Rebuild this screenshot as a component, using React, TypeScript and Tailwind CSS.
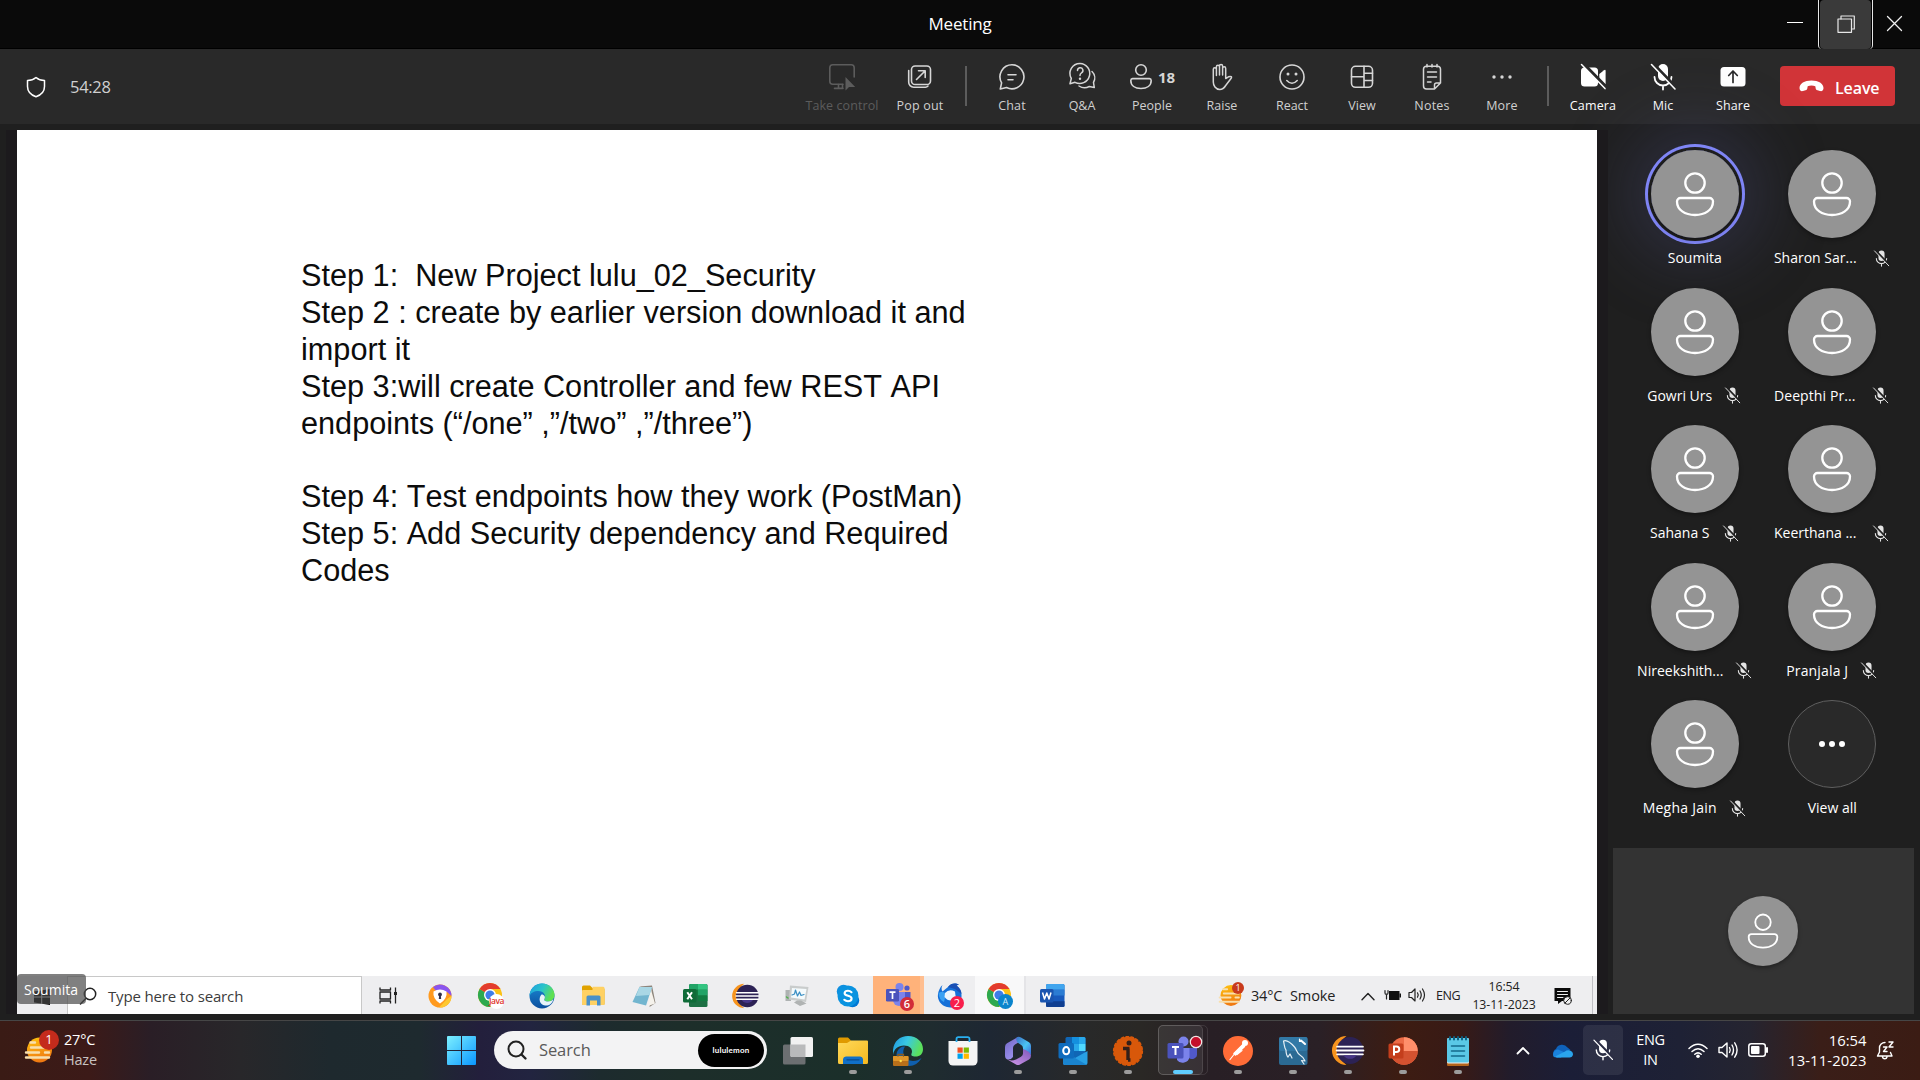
import React from "react";

const UI = "font-['Open_Sans','Noto_Sans',sans-serif]";

type IconProps = { w: number; h?: number; vb?: string; children: React.ReactNode; className?: string };

function Icon({ w, h, vb, children, className }: IconProps) {
  return (
    <svg
      width={w}
      height={h ?? w}
      viewBox={vb ?? `0 0 ${w} ${h ?? w}`}
      fill="none"
      strokeLinecap="round"
      strokeLinejoin="round"
      className={`shrink-0 overflow-visible ${className ?? ""}`}
    >
      {children}
    </svg>
  );
}

/* ---------- Meeting toolbar icons ---------- */

const TakeControlIcon = () => (
  <Icon w={28}>
    <g stroke="#5c5c5c" strokeWidth="1.6">
      <path d="M15 21.2H4.800A3 3 0 0 1 1.800 18.200V4.800A3 3 0 0 1 4.800 1.800H23.200A3 3 0 0 1 26.200 4.800V14" />
      <path d="M10.500 21.500V25M6.500 25.400H15M14.500 21.500V25" />
    </g>
    <path d="M17.500 14V27.500L21 24H27.200Z" fill="#5c5c5c" />
  </Icon>
);

const PopOutIcon = () => (
  <Icon w={28}>
    <g stroke="#d6d6d6" strokeWidth="1.6">
      <rect x="5.500" y="3" width="19" height="18.500" rx="3.600" />
      <path d="M2.700 7.500V19A5 5 0 0 0 7.700 24.200H19.500A4 4 0 0 0 22 23" />
      <path d="M10.500 16.500L19 8M12.500 7.800H19.200V14.500" />
    </g>
  </Icon>
);

const ChatIcon = () => (
  <Icon w={28}>
    <g stroke="#d6d6d6" strokeWidth="1.6">
      <path d="M14 1.800A12 12 0 1 1 8.500 24.500L2.300 26L3.600 19.800A12 12 0 0 1 14 1.800Z" />
      <path d="M10 11.700H18M10 16.700H15" />
    </g>
  </Icon>
);

const QAIcon = () => (
  <Icon w={28} h={30}>
    <g stroke="#d6d6d6" strokeWidth="1.5">
      <path d="M12 1.500A10 10 0 1 1 7 20.300L2 21.800L3.300 16.500A10 10 0 0 1 12 1.500Z" />
      <path d="M9.500 8.500A2.700 2.700 0 1 1 13.500 10.800Q12 11.700 12 13.500" />
      <path d="M24 9.500A9 9 0 0 1 25.500 20.500L26.300 25.500L21.300 24.500A10 10 0 0 1 11 24" />
    </g>
    <circle cx="12" cy="16.800" r="1.200" fill="#d6d6d6" />
  </Icon>
);

const PeopleIcon = () => (
  <Icon w={24} h={28}>
    <g stroke="#d6d6d6" strokeWidth="1.600">
      <circle cx="12" cy="7" r="5.300" />
      <path d="M3.600 15.600H20.400A2 2 0 0 1 22.200 17.500C22.200 22.500 18 25.500 12 25.500S1.800 22.500 1.800 17.500A2 2 0 0 1 3.600 15.600Z" />
    </g>
  </Icon>
);

const RaiseIcon = () => (
  <Icon w={26} h={28}>
    <path
      d="M4.300 15.500V6.200A1.500 1.500 0 0 1 7.400 6.200V12.500M7.400 11V3.800A1.500 1.500 0 0 1 10.500 3.800V12M10.500 10V3A1.500 1.500 0 0 1 13.600 3V12M13.600 11V5.400A1.500 1.500 0 0 1 16.700 5.400V15.500L19.500 13.800C22 12.800 23.300 14 22 15.500L16.700 22.500C15.300 24.800 13.800 26.500 10.800 26.500C6.500 26.500 4.300 22.500 4.300 19V15"
      stroke="#d6d6d6"
      strokeWidth="1.500"
    />
  </Icon>
);

const ReactIcon = () => (
  <Icon w={28}>
    <circle cx="14" cy="14" r="12" stroke="#d6d6d6" strokeWidth="1.600" />
    <circle cx="10" cy="11" r="1.500" fill="#d6d6d6" />
    <circle cx="18" cy="11" r="1.500" fill="#d6d6d6" />
    <path d="M8.800 17.500Q14 23 19.200 17.500" stroke="#d6d6d6" strokeWidth="1.600" />
  </Icon>
);

const ViewIcon = () => (
  <Icon w={28}>
    <g stroke="#d6d6d6" strokeWidth="1.600">
      <rect x="3.500" y="3.300" width="21" height="21" rx="4" />
      <path d="M16 3.300V24.300M3.500 13.800H16M16 10.200H24.500M16 17.500H24.500" />
    </g>
  </Icon>
);

const NotesIcon = () => (
  <Icon w={28}>
    <g stroke="#d6d6d6" strokeWidth="1.500">
      <path d="M16.500 26H8.500A3 3 0 0 1 5.500 23V6A3 3 0 0 1 8.500 3.200H19.500A3 3 0 0 1 22.500 6V20L16.500 26V22A2 2 0 0 1 18.500 20H22.500" />
      <path d="M9 1.500V4M14 1.500V4M19 1.500V4M9.500 9H18.500M9.500 14H18.500M9.500 19H13" />
    </g>
  </Icon>
);

const MoreIcon = () => (
  <Icon w={28}>
    <circle cx="6" cy="14" r="1.700" fill="#d6d6d6" />
    <circle cx="14" cy="14" r="1.700" fill="#d6d6d6" />
    <circle cx="22" cy="14" r="1.700" fill="#d6d6d6" />
  </Icon>
);

const CameraIcon = () => (
  <Icon w={28}>
    <rect x="2" y="4.500" width="17" height="19" rx="3.500" fill="#fff" />
    <path d="M20.300 11L25 7.200Q26.600 6 26.600 8V20.500Q26.600 22 25 21L20.300 17.500Z" fill="#fff" />
    <path d="M4.500 1L27 24" stroke="#292929" strokeWidth="3.500" />
    <path d="M2.500 1.500L26 25.600" stroke="#fff" strokeWidth="1.500" />
  </Icon>
);

const MicOffIcon = ({ size, bg, color = "#fff" }: { size: number; bg: string; color?: string }) => (
  <Icon w={size} vb="0 0 28 28">
    <rect x="9" y="1" width="10" height="17" rx="5" fill={color} />
    <path d="M5.500 14A8.500 8.500 0 0 0 22.500 14M14 22.500V26.500" stroke={color} strokeWidth="1.800" />
    <path d="M4.500 1.200L27.200 24.500" stroke={bg} strokeWidth="3.200" />
    <path d="M2.500 1.500L26 26" stroke={color} strokeWidth="1.600" />
  </Icon>
);

const ShareIcon = () => (
  <Icon w={28}>
    <rect x="1.500" y="4" width="25" height="19.500" rx="3.500" fill="#fff" />
    <path d="M14 19.500V8.500M9.700 12.500L14 8L18.300 12.500" stroke="#292929" strokeWidth="1.700" />
  </Icon>
);

const HangUpIcon = () => (
  <Icon w={25} h={12}>
    <path
      d="M12.500 0.500C19.500 0.500 24.500 3.500 24.500 8C24.500 10.500 23 11.500 21 11L18.500 10.300C17 9.900 16.700 9 16.500 7.200L16.300 6.200C14 5.300 11 5.300 8.700 6.200L8.500 7.200C8.300 9 8 9.900 6.500 10.300L4 11C2 11.500 0.500 10.500 0.500 8C0.500 3.500 5.500 0.500 12.500 0.500Z"
      fill="#fff"
    />
  </Icon>
);

function ToolButton({ icon, label, className, tone = "text-[#d0d0d0]" }: { icon: React.ReactNode; label: string; className?: string; tone?: string }) {
  return (
    <div className={`flex shrink-0 flex-col items-center pt-[14px] ${className ?? "w-[70px]"}`}>
      <div className="flex h-[28px] items-center justify-center">{icon}</div>
      <span className={`mt-[6px] text-[12.5px] leading-[18px] whitespace-nowrap ${tone}`}>{label}</span>
    </div>
  );
}

/* ---------- Participants ---------- */

function Avatar({ size = 88 }: { size?: number }) {
  return (
    <div className="rounded-full bg-[#949494] shadow-[0_2px_4px_rgba(0,0,0,0.35)]">
      <Icon w={size} vb="0 0 88 88">
        <g stroke="#fff" strokeWidth="2.300">
          <circle cx="44" cy="33" r="9.700" />
          <path d="M29.500 48H58.500A3.500 3.500 0 0 1 62 51.500C62 60 54 65 44 65S26 60 26 51.500A3.500 3.500 0 0 1 29.500 48Z" />
        </g>
      </Icon>
    </div>
  );
}

function Participant({ name, muted = true, speaking = false, nameClass }: { name: string; muted?: boolean; speaking?: boolean; nameClass: string }) {
  return (
    <div className="flex h-[137.500px] flex-col items-center">
      <div
        className={
          speaking
            ? "rounded-full ring-[3px] ring-[#7f85f5] ring-offset-[3px] ring-offset-[#1f1f1f] shadow-[0_0_70px_24px_rgba(80,82,140,0.3)]"
            : "rounded-full"
        }
      >
        <Avatar />
      </div>
      <div className="mt-[9px] flex h-[22px] items-center text-white">
        <span className={`whitespace-nowrap text-[14px] leading-[22px] ${nameClass}`}>{name}</span>
        {muted && <MicOffIcon size={17} bg="#1f1f1f" color="#e4e4e4" />}
      </div>
    </div>
  );
}

/* ---------- App logos ---------- */

const ChromeLogo = ({ badge }: { badge: React.ReactNode }) => (
  <div className="relative">
    <Icon w={28}>
      <circle cx="13" cy="13" r="12" fill="#fbc116" />
      <path d="M13 13L2.600 7A12 12 0 0 0 13 25L18 16Z" fill="#2da94f" />
      <path d="M2.600 7A12 12 0 0 1 23.400 7H13V13Z" fill="#e33b2e" />
      <circle cx="13" cy="13" r="6" fill="#fff" />
      <circle cx="13" cy="13" r="4.600" fill="#3e7de8" />
    </Icon>
    {badge}
  </div>
);

const SecureBrowserLogo = () => (
  <Icon w={24}>
    <circle cx="12" cy="12" r="11.500" fill="#ff9a1e" />
    <path d="M5 3A11.500 11.500 0 0 1 23.500 12L19 8L8 7Z" fill="#8a55ee" />
    <path d="M23.500 12A11.500 11.500 0 0 1 11 23.500L19 15Z" fill="#fdc830" />
    <path d="M5.500 7.500Q12 3.500 18.500 7.500Q19.500 15 12 19.500Q4.500 15 5.500 7.500Z" fill="#fff" />
    <circle cx="12" cy="10.500" r="1.900" fill="#30304a" />
    <path d="M11.200 11H12.800L13.200 15H10.800Z" fill="#30304a" />
  </Icon>
);

const EdgeLogo = ({ size = 26, id }: { size?: number; id: string }) => (
  <Icon w={size} vb="0 0 26 26">
    <defs>
      <linearGradient id={`${id}a`} x1="0" y1="0" x2="1" y2="0.400">
        <stop offset="0" stopColor="#1c9ee2" />
        <stop offset="0.550" stopColor="#2bc4c9" />
        <stop offset="1" stopColor="#5fe04f" />
      </linearGradient>
      <linearGradient id={`${id}b`} x1="0" y1="0" x2="0" y2="1">
        <stop offset="0" stopColor="#1a8ad6" />
        <stop offset="1" stopColor="#0c4f9e" />
      </linearGradient>
    </defs>
    <circle cx="13" cy="13" r="12.500" fill={`url(#${id}b)`} />
    <path d="M0.600 11.500C2 4 7.500 0.500 13 0.500C20.500 0.500 25.500 6 25.500 12C25.500 16 22.500 18.500 19 18.500C16 18.500 14.500 17.500 15.500 15.800C17.500 12.500 14.500 8 9.500 8C5 8 1.500 10 0.600 13Z" fill={`url(#${id}a)`} />
    <path d="M15.500 15.800C14.500 17.500 16 18.500 19 18.500C21 18.500 23 17.800 24.300 16.300C23.500 21 19.500 23 16 22.500C10.500 21.500 9 15.500 12.500 11.500C15.500 11.500 16.500 14 15.500 15.800Z" fill="#e8f3f8" />
  </Icon>
);

const TaskbarEdgeLogo = () => (
  <Icon w={32} h={32}>
    <defs>
      <linearGradient id="oe" x1="0" y1="0" x2="1" y2="0.300">
        <stop offset="0" stopColor="#1d96e0" />
        <stop offset="0.500" stopColor="#39c8e4" />
        <stop offset="1" stopColor="#5be05c" />
      </linearGradient>
    </defs>
    <path d="M1 15C2 6 8 1 16 1C25 1 31 7 31 14C31 19 28 21.500 23.500 21.500C20 21.500 18.500 20.500 19.800 18C21 14 17.500 10.500 12 10.500C6 10.500 2 14 1 20Z" fill="url(#oe)" />
    <path d="M13 11.500C9 17 12 26 21 26C24.500 26 27 25 29.500 23C26 29.500 20 32 14 30.500C7 29 3 23 5 17C6.500 13 10 11 13 11.500Z" fill="#0f5fae" />
    <rect x="1" y="21" width="15.500" height="10" rx="1" fill="#b9701a" />
    <rect x="1" y="21" width="15.500" height="5" rx="1" fill="#e0962a" />
    <circle cx="8.700" cy="26" r="1.200" fill="#ffe04a" />
    <path d="M6 21V19.500H11.500V21" stroke="#8b5a1b" strokeWidth="1.300" />
  </Icon>
);

const SmallFolder = () => (
  <Icon w={26} h={24}>
    <path d="M2 3A1.500 1.500 0 0 1 3.500 1.500H10L12.500 4H23A1.500 1.500 0 0 1 24.500 5.500V20.500H2Z" fill="#e0a200" />
    <rect x="2" y="6" width="22.500" height="15" rx="1" fill="#ffd163" />
    <path d="M12.500 2.800H23A1.500 1.500 0 0 1 24.500 4V8H12.500Z" fill="#ffd163" />
    <path d="M6.500 21.500V13A1.500 1.500 0 0 1 8 11.500H19A1.500 1.500 0 0 1 20.500 13V21.500H17V16.500H10V21.500Z" fill="#4a90c8" />
  </Icon>
);

const SmallNotepad = () => (
  <Icon w={26}>
    <path d="M8 3.500L21 2.500L24.500 20L18.500 24L20.500 6Z" fill="#8d857c" />
    <path d="M19.500 5L24 20.500L17 23Z" fill="#f5f2ec" />
    <path d="M8.500 4H21L15 22.500L1.500 19Z" fill="#72b5cf" />
    <path d="M8.500 4H21L18.500 12L5 13Z" fill="#a9d7e5" />
  </Icon>
);

const ExcelLogo = () => (
  <Icon w={26}>
    <rect x="7" y="1" width="18.500" height="23" rx="1.500" fill="#1d7044" />
    <path d="M16 1H24A1.500 1.500 0 0 1 25.500 2.500V6.700H16Z" fill="#33c481" />
    <path d="M7 2.500A1.500 1.500 0 0 1 8.500 1H16V6.700H7ZM16 6.700H25.500V12.500H16Z" fill="#21a366" />
    <path d="M7 6.700H16V12.500H7ZM16 12.500H25.500V18H16Z" fill="#107c41" />
    <rect x="1" y="6" width="13.500" height="13.500" rx="1.500" fill="#0f6b38" />
    <path d="M5.300 9.300L10 16.200M10 9.300L5.300 16.200" stroke="#fff" strokeWidth="2" strokeLinecap="butt" />
  </Icon>
);

const EclipseLogo = ({ size }: { size: number }) => (
  <Icon w={size} vb="0 0 30 30">
    <path d="M13 1A14 14 0 0 0 13 29A17 17 0 0 1 13 1Z" fill="#f7941e" />
    <circle cx="16.500" cy="15" r="13" fill="#2c2255" />
    <path d="M4 11.300H29M3.500 15H29.500M4 18.700H29" stroke="#fff" strokeWidth="1.700" />
    <path d="M10 19.700H23A8 8 0 0 1 10 19.700Z" fill="#473788" />
  </Icon>
);

const MonitorLogo = () => (
  <Icon w={26}>
    <path d="M1.500 7H7V18H1.500Z" fill="#aeb2b2" />
    <path d="M6 2.500L24.500 4L22 19L5 16.500Z" fill="#c9cccc" />
    <path d="M8 5L22.500 6L20.500 16.500L7 14.500Z" fill="#f4fafc" />
    <path d="M8 12L10.500 11L11.500 7L13.500 13L15.500 9L17 12.500L20 11.500" stroke="#3a8fc4" strokeWidth="1.200" />
    <path d="M13 17.500H17L22.500 20.500L16 23L10 19.500Z" fill="#b0b3b3" />
    <path d="M2.500 14L4 15" stroke="#4fb04a" strokeWidth="1.500" />
  </Icon>
);

const SkypeLogo = () => (
  <Icon w={24}>
    <circle cx="7.500" cy="7.500" r="6.700" fill="#0d8fe0" />
    <circle cx="16.500" cy="16.500" r="6.700" fill="#0078d4" />
    <circle cx="12" cy="12" r="10.500" fill="#0a93e0" />
    <path d="M15.500 8.200Q14 6.800 12 6.800C10 6.800 8.600 7.800 8.600 9.200C8.600 12.500 15.600 11.200 15.600 14.500C15.600 16.200 14 17.200 12 17.200Q9.800 17.200 8.300 15.800" stroke="#fff" strokeWidth="2.100" />
  </Icon>
);

const TeamsSmallLogo = () => (
  <Icon w={28}>
    <circle cx="14.500" cy="5" r="4" fill="#7b83eb" />
    <circle cx="22" cy="6" r="2.600" fill="#5059c9" />
    <path d="M18 10H25.500V17A4 4 0 0 1 18 18Z" fill="#5059c9" />
    <path d="M8 10H20V18A6 6 0 0 1 8 18Z" fill="#7b83eb" />
    <rect x="1" y="7" width="13" height="12.500" rx="1.300" fill="#4b53bc" />
    <path d="M4.500 10.200H10.500M7.500 10.200V17" stroke="#fff" strokeWidth="1.700" strokeLinecap="butt" />
  </Icon>
);

const ThunderbirdLogo = () => (
  <Icon w={28}>
    <path d="M6.500 3C5 6 5.500 8 6.500 9.500L12 5C15 0.500 20 1 23 2.500L20.500 3.500C25 7 27 13 24.500 19C22 24.500 16 26.500 11 25C5 23.500 1 18 2 12C2.500 9 4 5 6.500 3Z" fill="#1670d8" />
    <path d="M12 5C15 0.500 20 1 23 2.500L20.500 3.500C24 6 25.500 9 25.500 12L19 7Z" fill="#1a4fb4" />
    <path d="M2.500 11C4 10 8 9 10 12L8 20Q3 18 2.500 11Z" fill="#3aa0f2" />
    <path d="M9 11Q13 6.500 19 9.500L20 17Q13 21 8.500 15Z" fill="#edf5fc" />
  </Icon>
);

const WordLogo = () => (
  <Icon w={26}>
    <rect x="7" y="1" width="18.500" height="23" rx="1.500" fill="#185abd" />
    <path d="M7 2.500A1.500 1.500 0 0 1 8.500 1H24A1.500 1.500 0 0 1 25.500 2.500V6.700H7Z" fill="#41a5ee" />
    <path d="M7 6.700H25.500V12.500H7Z" fill="#2b7cd3" />
    <path d="M7 18.200H25.500V22.500A1.500 1.500 0 0 1 24 24H8.500A1.500 1.500 0 0 1 7 22.500Z" fill="#103f91" />
    <rect x="1" y="6" width="13.500" height="13.500" rx="1.500" fill="#1a55b0" />
    <path d="M3.500 9.500L5.500 16L7.800 10L10 16L12 9.500" stroke="#fff" strokeWidth="1.500" strokeLinecap="butt" />
  </Icon>
);

const HazeSun = ({ id, w }: { id: string; w: number }) => (
  <Icon w={w} vb="0 0 30 30">
    <defs>
      <linearGradient id={id} x1="0" y1="0" x2="0.300" y2="1">
        <stop offset="0" stopColor="#ffc40f" />
        <stop offset="1" stopColor="#f07a12" />
      </linearGradient>
    </defs>
    <circle cx="15.500" cy="15" r="12.500" fill={`url(#${id})`} />
    <g stroke="#f8dfae" strokeWidth="2.400">
      <path d="M6.500 7.500H11M7 12.500H25M2 17.500H15M21 17.500H25M2 22.500H25" />
    </g>
  </Icon>
);

const FolderLogo = () => (
  <Icon w={32}>
    <defs>
      <linearGradient id="fold" x1="0" y1="0" x2="1" y2="1">
        <stop offset="0" stopColor="#ffd95a" />
        <stop offset="1" stopColor="#f5b91f" />
      </linearGradient>
    </defs>
    <path d="M1 4A1.500 1.500 0 0 1 2.500 2.500H11L14 5.500L11 9H1Z" fill="#e09a00" />
    <path d="M1 8H10L14 5.500H30A1 1 0 0 1 31 6.500V27.500A1.500 1.500 0 0 1 29.500 29H2.500A1.500 1.500 0 0 1 1 27.500Z" fill="url(#fold)" />
    <path d="M6 29V24A3 3 0 0 1 9 21.500H23A3 3 0 0 1 26 24V29Z" fill="#1070c8" />
    <path d="M10 24.800H22" stroke="#0a4a8c" strokeWidth="1.300" />
  </Icon>
);

const StoreLogo = () => (
  <Icon w={32}>
    <path d="M1.500 6H30.500V26A4.500 4.500 0 0 1 26 30.500H6A4.500 4.500 0 0 1 1.500 26Z" fill="#f4f4f4" />
    <path d="M9.500 7V4A1.800 1.800 0 0 1 11.300 2.200H20.700A1.800 1.800 0 0 1 22.500 4V7" stroke="#2ab0f0" strokeWidth="1.800" strokeLinecap="butt" />
    <rect x="10.500" y="12.500" width="5.200" height="5.200" fill="#f05022" />
    <rect x="16.700" y="12.500" width="5.200" height="5.200" fill="#7db900" />
    <rect x="10.500" y="18.600" width="5.200" height="5.200" fill="#00a2ed" />
    <rect x="16.700" y="18.600" width="5.200" height="5.200" fill="#ffb800" />
  </Icon>
);

const M365Logo = () => (
  <Icon w={32}>
    <defs>
      <linearGradient id="m1" x1="0" y1="0" x2="0.600" y2="1">
        <stop offset="0" stopColor="#7266c4" />
        <stop offset="1" stopColor="#9d93f0" />
      </linearGradient>
      <linearGradient id="m2" x1="0" y1="0" x2="1" y2="1">
        <stop offset="0" stopColor="#3b6fc4" />
        <stop offset="0.550" stopColor="#4ac4f2" />
        <stop offset="1" stopColor="#3c63d8" />
      </linearGradient>
      <linearGradient id="m3" x1="0" y1="1" x2="1" y2="0">
        <stop offset="0" stopColor="#d59bea" />
        <stop offset="1" stopColor="#7d57bc" />
      </linearGradient>
    </defs>
    <path d="M16 2L5 8.200Q3 9.500 3 12V20.500Q3 24.500 6.500 24.500Q9 24.500 11 22V13Q11 10.500 13 9.500L17 7Z" fill="url(#m1)" />
    <path d="M14.500 2.500Q16.500 1.200 19 2.500L27 7.200Q29 8.500 29 11V20.500Q27.500 17.500 21 14.500V13Q21 10.500 18.500 9.500Q13 7 14.500 2.500Z" fill="url(#m2)" />
    <path d="M4.500 24L14 29.500Q16 30.500 18 29.500L27 24.500Q29 23 29 20.500Q28 16 21 14V18.500Q21 20.500 19 21.700L14 24.500Q9 26.500 4.500 24Z" fill="url(#m3)" />
  </Icon>
);

const OutlookLogo = () => (
  <Icon w={32}>
    <rect x="8.500" y="2" width="20" height="22" rx="1.500" fill="#1066b5" />
    <path d="M15 2H22V9H15ZM8.500 9H15V16H8.500Z" fill="#1490df" />
    <path d="M22 2H27A1.500 1.500 0 0 1 28.500 3.500V9H22ZM15 9H22V16H15Z" fill="#28a8ea" />
    <path d="M22 9H28.500V16H22Z" fill="#50d9ff" />
    <path d="M6 16L18 23L30.500 16V28A2 2 0 0 1 28.500 30H8A2 2 0 0 1 6 28Z" fill="#28a0e4" />
    <path d="M6 16L30 30H8A2 2 0 0 1 6 28Z" fill="#1a84cf" />
    <rect x="1.500" y="8" width="15.500" height="15.500" rx="1.500" fill="#0f6cbd" />
    <ellipse cx="9.200" cy="15.700" rx="3" ry="3.600" stroke="#fff" strokeWidth="2" />
  </Icon>
);

const OrangeInfoLogo = () => (
  <Icon w={32}>
    <circle cx="16" cy="16" r="14.300" fill="#d8580a" />
    <circle cx="16" cy="16" r="14.300" stroke="#d8580a" strokeWidth="1.600" strokeDasharray="2.500 2.500" />
    <circle cx="17" cy="8" r="2.500" fill="#33201a" />
    <path d="M11 13.500H17.500M16 13.500V25M16 25H18.500" stroke="#33201a" strokeWidth="3.400" strokeLinecap="butt" />
  </Icon>
);

const TeamsLogo = () => (
  <Icon w={34} h={32}>
    <circle cx="17.500" cy="6.500" r="5" fill="#7b83eb" />
    <path d="M23 13H31V20A5 5 0 0 1 23 23Z" fill="#5059c9" />
    <path d="M11 13H23.500V22A7 7 0 0 1 11 25Z" fill="#7b83eb" />
    <rect x="1.500" y="8" width="16" height="15.500" rx="1.500" fill="#4b53bc" />
    <path d="M6 12H13M9.500 12V20" stroke="#fff" strokeWidth="2" strokeLinecap="butt" />
    <circle cx="30" cy="7" r="5.700" fill="#c50f2b" stroke="#f2e6e6" strokeWidth="1.200" />
  </Icon>
);

const PostmanLogo = () => (
  <Icon w={32}>
    <circle cx="16" cy="16" r="15" fill="#ff6c37" />
    <circle cx="23" cy="8" r="3" fill="#fff" />
    <path d="M21 9.500L12 18.500L13.500 20L22.500 11.500Z" fill="#fff" stroke="#fff" strokeWidth="1.600" />
    <path d="M12 19.500L8 24.500M20 15.500L15 19.500" stroke="#fff" strokeWidth="1.200" />
  </Icon>
);

const MySqlLogo = () => (
  <Icon w={32}>
    <rect x="2" y="2" width="28.500" height="28" rx="2" fill="#2b6a93" />
    <rect x="2" y="2" width="28.500" height="14" rx="2" fill="#3279a6" />
    <path
      d="M6.500 6C10 4.500 14 8 17.500 12C20 15 20 19 23.500 20.500C25.500 21.500 27 23.500 28 26L24.500 25.500L27 29M6.500 6C7.500 10 7 12 9 15C9 18 9.500 20.500 11 22L13 19L15 23"
      stroke="#e6f0f6"
      strokeWidth="1.200"
    />
    <path d="M24 5.500L28 9" stroke="#fff" strokeWidth="2" />
    <path d="M22.500 4V6.500H25" stroke="#fff" strokeWidth="1.200" />
  </Icon>
);

const PowerPointLogo = () => (
  <Icon w={32}>
    <circle cx="17" cy="16" r="13.700" fill="#ed6c47" />
    <path d="M17 2.300A13.700 13.700 0 0 1 30.700 16H17Z" fill="#ff8f6b" />
    <path d="M3.300 16H30.700A13.700 13.700 0 0 1 3.300 16Z" fill="#d35230" />
    <rect x="1.500" y="8.500" width="15" height="15" rx="1.500" fill="#c43e1c" />
    <path d="M7 20.500V11.500H9.500A2.500 2.500 0 0 1 9.500 17H7" stroke="#fff" strokeWidth="2" strokeLinecap="butt" strokeLinejoin="miter" />
  </Icon>
);

const NotepadLogo = () => (
  <Icon w={32}>
    <rect x="5" y="26" width="22" height="5" rx="1" fill="#b5651d" />
    <rect x="5" y="3" width="22" height="25.500" rx="1.500" fill="#f0f0f0" />
    <rect x="5" y="3" width="22" height="24.500" rx="1.500" fill="#5ac8e6" />
    <path d="M9.500 11H22.500M9.500 16H22.500M9.500 21H22.500" stroke="#146a8c" strokeWidth="1.600" />
    <path d="M8 2V4.500M12 2V4.500M16 2V4.500M20 2V4.500M24 2V4.500" stroke="#0e5f80" strokeWidth="2" />
  </Icon>
);

const TaskViewLogo = () => (
  <Icon w={32}>
    <rect x="1" y="9.500" width="22.500" height="20" rx="1.500" fill="#6c6f71" />
    <rect x="8.500" y="2" width="22.500" height="20" rx="1.500" fill="#f1f1f1" />
    <path d="M8.500 9.500H23.500V22H10A1.500 1.500 0 0 1 8.500 20.500Z" fill="#b9babb" />
  </Icon>
);

const sharedApps: { key: string; tile?: string; node: React.ReactNode }[] = [
  { key: "secure", node: <SecureBrowserLogo /> },
  {
    key: "java",
    node: (
      <ChromeLogo
        badge={
          <span className="absolute top-[12px] left-[12px] flex size-[15px] items-center justify-center rounded-full bg-white text-[8.500px] leading-none font-semibold tracking-[-0.500px] text-[#e0342b]">
            Java
          </span>
        }
      />
    ),
  },
  { key: "edge", node: <EdgeLogo id="se" /> },
  { key: "folder", node: <SmallFolder /> },
  { key: "notepad", node: <SmallNotepad /> },
  { key: "excel", node: <ExcelLogo /> },
  { key: "eclipse", node: <EclipseLogo size={26} /> },
  { key: "monitor", node: <MonitorLogo /> },
  { key: "skype", node: <SkypeLogo /> },
  {
    key: "teams",
    tile: "bg-[#ffb27a] border-r-4 border-[#ffbe90]",
    node: (
      <div className="relative ml-1">
        <TeamsSmallLogo />
        <span className="absolute -right-px -bottom-px flex size-[14px] items-center justify-center rounded-full bg-[#d22c38] text-[11px] font-semibold text-white">6</span>
      </div>
    ),
  },
  {
    key: "thunderbird",
    node: (
      <div className="relative">
        <ThunderbirdLogo />
        <span className="absolute right-0 bottom-0 flex size-[14px] items-center justify-center rounded-full bg-[#f81e4c] text-[11px] text-white">2</span>
      </div>
    ),
  },
  {
    key: "chrome",
    tile: "bg-[#f8f8f9] border-r-2 border-[#e4e4e7]",
    node: (
      <ChromeLogo
        badge={
          <span className="absolute top-[12px] left-[12px] flex size-[15px] items-center justify-center rounded-full bg-[#0a84cc] text-[9px] leading-none text-[#d6ecf8]">
            A
          </span>
        }
      />
    ),
  },
  { key: "word", node: <WordLogo /> },
];

const pinnedApps: { key: string; running?: boolean; active?: boolean; node: React.ReactNode }[] = [
  { key: "view", node: <TaskViewLogo /> },
  { key: "files", running: true, node: <FolderLogo /> },
  { key: "edge", running: true, node: <TaskbarEdgeLogo /> },
  { key: "store", node: <StoreLogo /> },
  { key: "m365", running: true, node: <M365Logo /> },
  { key: "outlook", running: true, node: <OutlookLogo /> },
  { key: "info", running: true, node: <OrangeInfoLogo /> },
  { key: "teams", active: true, node: <TeamsLogo /> },
  { key: "postman", running: true, node: <PostmanLogo /> },
  { key: "mysql", running: true, node: <MySqlLogo /> },
  { key: "eclipse", running: true, node: <EclipseLogo size={31} /> },
  { key: "ppt", running: true, node: <PowerPointLogo /> },
  { key: "notepad", running: true, node: <NotepadLogo /> },
];

/* ---------- Page regions ---------- */

function TitleBar() {
  return (
    <header className="flex h-[49px] shrink-0 items-stretch border-b border-black bg-[#0a0a0a]">
      <div className="flex flex-1 items-center justify-center pl-[142px] text-[17px] text-white">
        <span className="tracking-[-0.200px]">Meeting</span>
      </div>
      <div className="flex w-[142px] items-stretch">
        <div className="flex w-[40px] pt-[22px] pl-[9px]">
          <span className="h-px w-[16px] bg-white" />
        </div>
        <div className="-mb-px flex w-[55px] items-center justify-center rounded-b-[4px] border-x border-[#e8e8e8] bg-black px-px">
          <div className="flex h-full w-full items-center justify-center rounded-[4px] bg-[#3a3a3a] pb-[2px]">
            <Icon w={18}>
              <g stroke="#e8e8e8" strokeWidth="1.200">
                <path d="M1 4H14.500V17.300H1Z" />
                <path d="M4 4V1H17.300V14H14.500" />
              </g>
            </Icon>
          </div>
        </div>
        <div className="flex flex-1 items-center pb-[2px] pl-[13px]">
          <Icon w={17}>
            <path d="M1.500 1.500L15.500 15.500M15.500 1.500L1.500 15.500" stroke="#f0f0f0" strokeWidth="1.300" />
          </Icon>
        </div>
      </div>
    </header>
  );
}

function Toolbar() {
  return (
    <div className="flex h-[75px] shrink-0 items-start bg-[#292929]">
      <div className="flex h-full flex-1 items-center pl-[26px]">
        <Icon w={20} h={22}>
          <path d="M10 1.500Q13.500 4.500 18.500 4.500V10.500C18.500 15.500 15 19 10 20.800C5 19 1.500 15.500 1.500 10.500V4.500Q6.500 4.500 10 1.500Z" stroke="#fff" strokeWidth="1.500" />
        </Icon>
        <span className="mt-[2px] ml-[24px] text-[16.500px] tracking-[-0.300px] text-[#d0d0d0]">54:28</span>
      </div>
      <ToolButton className="w-[80px]" icon={<TakeControlIcon />} label="Take control" tone="text-[#5c5c5c] tracking-[0.080px]" />
      <ToolButton className="w-[76px]" icon={<PopOutIcon />} label="Pop out" tone="text-[#d0d0d0] tracking-[0.200px]" />
      <div className="mt-[17px] mr-[10px] ml-[7px] h-[40px] w-[2px] bg-[#5c5c5c]" />
      <ToolButton icon={<ChatIcon />} label="Chat" tone="text-[#d0d0d0] tracking-[0.200px]" />
      <ToolButton icon={<QAIcon />} label="Q&A" />
      <ToolButton
        icon={
          <div className="flex items-center gap-[5px]">
            <PeopleIcon />
            <span className="text-[15px] leading-none font-bold text-[#d6d6d6]">18</span>
          </div>
        }
        label="People"
      />
      <ToolButton icon={<RaiseIcon />} label="Raise" />
      <ToolButton icon={<ReactIcon />} label="React" />
      <ToolButton icon={<ViewIcon />} label="View" />
      <ToolButton icon={<NotesIcon />} label="Notes" tone="text-[#d0d0d0] tracking-[0.200px]" />
      <ToolButton icon={<MoreIcon />} label="More" tone="text-[#d0d0d0] tracking-[0.200px]" />
      <div className="mt-[17px] mr-[9px] ml-[10px] h-[40px] w-[2px] bg-[#5c5c5c]" />
      <ToolButton icon={<CameraIcon />} label="Camera" tone="text-white tracking-[0.150px]" />
      <ToolButton icon={<MicOffIcon size={28} bg="#292929" />} label="Mic" tone="text-white tracking-[0.100px]" />
      <ToolButton icon={<ShareIcon />} label="Share" tone="text-white tracking-[0.100px]" />
      <div className="mt-[17px] mr-[25px] ml-[12px] flex h-[40px] w-[115px] items-center rounded-[4px] bg-[#d13438] pl-[19px] text-[16px] font-semibold text-white">
        <HangUpIcon />
        <span className="mt-[3px] ml-[11px] tracking-[-0.100px]">Leave</span>
      </div>
    </div>
  );
}

function SharedTaskbar() {
  return (
    <div className="relative flex h-[38px] w-full shrink-0 items-stretch bg-[#eeeef0] text-[#222]">
      <div className="flex w-[50px] items-end pb-[9px] pl-[17px]">
        <Icon w={16}>
          <path d="M0 2.500L7.200 1.500V7.500H0ZM8.200 1.300L16 0V7.500H8.200ZM0 8.500H7.200V14.500L0 13.500ZM8.200 8.500H16V16L8.200 14.800Z" fill="#000" />
        </Icon>
      </div>
      <div className="flex w-[295px] items-center border-t border-r border-l border-[#c8c8c8] bg-white pl-[11px]">
        <Icon w={18}>
          <circle cx="11" cy="7" r="5.700" stroke="#222" strokeWidth="1.500" />
          <path d="M6.800 11.500L1.500 17" stroke="#222" strokeWidth="1.600" />
        </Icon>
        <span className="mt-[2px] ml-[11px] text-[15px] tracking-[-0.150px] whitespace-nowrap text-[#3c3c3c]">Type here to search</span>
      </div>
      <div className="flex w-[52.400px] shrink-0 items-center justify-center">
        <Icon w={18} h={17}>
          <g stroke="#222" strokeWidth="1.300" strokeLinecap="butt">
            <path d="M1 0.500V3H11.500V0.500M1 16.500V14H11.500V16.500M1 5H11.500V12H1ZM16.500 0.500V16.500" />
          </g>
          <rect x="15" y="5" width="3" height="3" fill="#222" />
        </Icon>
      </div>
      {sharedApps.map((a) => (
        <div key={a.key} className={`flex w-[51px] shrink-0 items-center justify-center pt-[2px] ${a.tile ?? ""}`}>
          {a.node}
        </div>
      ))}
      <div className="flex flex-1 items-center justify-end">
        <div className="relative">
          <HazeSun id="hz1" w={25} />
          <span className="absolute -top-[1px] -right-[1px] flex size-[12px] items-center justify-center rounded-full bg-[#c83a1c] text-[9px] text-white">1</span>
        </div>
        <span className="mt-[2px] ml-[8px] w-[39px] text-[14.500px] tracking-[-0.200px]">34°C</span>
        <span className="mt-[2px] w-[71px] text-[14.500px] tracking-[-0.100px]">Smoke</span>
        <Icon w={14} h={9} className="mt-[2px]">
          <path d="M1 7.800L7 1.500L13 7.800" stroke="#222" strokeWidth="1.400" />
        </Icon>
        <Icon w={17} h={14} className="ml-[9px]">
          <path d="M1 2.500V5A1.500 1.500 0 0 0 4 5V2.500M2.500 6V11" stroke="#222" strokeWidth="1.200" />
          <rect x="5" y="3" width="10.500" height="9" fill="#111" />
          <rect x="15.500" y="5.500" width="1.500" height="4" fill="#111" />
        </Icon>
        <Icon w={18} h={16} className="ml-[7px]">
          <path d="M1 5.500H3.500L7 2V14L3.500 10.500H1ZM9.500 5.800Q11 8 9.500 10.200M12 4Q14.500 8 12 12M14.500 2Q18.500 8 14.500 14" stroke="#222" strokeWidth="1.200" />
        </Icon>
        <span className="mt-[3px] ml-[10px] w-[33px] text-[12.500px] tracking-[-0.400px]">ENG</span>
        <div className="mt-[2px] flex w-[70px] flex-col items-center text-[12.300px] leading-[18px] tracking-[-0.100px]">
          <span>16:54</span>
          <span>13-11-2023</span>
        </div>
        <Icon w={18} h={18} className="mt-[2px] ml-[15px]">
          <path d="M0.500 1H16.500V14H8L4 17V14H0.500Z" fill="#0a0a0a" />
          <path d="M3.500 4.500H13.500M3.500 7.500H13.500M3.500 10.500H9" stroke="#eee" strokeWidth="1" />
          <circle cx="13.500" cy="13.500" r="3.800" fill="#eee" stroke="#222" strokeWidth="1" />
          <path d="M11 16L16 11" stroke="#222" strokeWidth="1" />
        </Icon>
        <div className="ml-[20px] h-[38px] w-[5px] border-l border-[#c0c0c4]" />
      </div>
      <span className="absolute -top-[2px] left-0 flex h-[30px] w-[69px] items-center justify-center rounded-[4px] bg-[#4a4a4a]/70 pr-px text-[14px] text-white">Soumita</span>
    </div>
  );
}

function SharedScreen() {
  return (
    <main className="relative z-10 ml-[6px] flex h-[884px] w-[1602px] shrink-0 flex-col bg-[#1c1a1d] px-[11px]">
      <div className="flex flex-1 flex-col bg-white">
        <div className="pt-[127px] pl-[284px] font-['Liberation_Sans',Arial,sans-serif] text-[30.670px] leading-[36.900px] whitespace-pre text-[#0c0c0c] [font-kerning:none]">
          <p>Step 1:{"  "}New Project lulu_02_Security</p>
          <p>Step 2 : create by earlier version download it and</p>
          <p>import it</p>
          <p>Step 3:will create Controller and few REST API</p>
          <p>endpoints (“/one” ,”/two” ,”/three”)</p>
          <p> </p>
          <p>Step 4: Test endpoints how they work (PostMan)</p>
          <p>Step 5: Add Security dependency and Required</p>
          <p>Codes</p>
        </div>
      </div>
      <SharedTaskbar />
    </main>
  );
}

function Roster() {
  return (
    <aside className="flex flex-1 flex-col">
      <div className="grid grid-cols-[137.500px_137.500px] pt-[20px] pl-[18px]">
        <Participant name="Soumita" muted={false} speaking nameClass="" />
        <Participant name="Sharon Sar..." nameClass="mr-[16px] -ml-px" />
        <Participant name="Gowri Urs" nameClass="mr-[12px] -ml-px" />
        <Participant name="Deepthi Pr..." nameClass="mr-[16px] -ml-[2px] tracking-[0.100px]" />
        <Participant name="Sahana S" nameClass="mr-[12px] -ml-px" />
        <Participant name="Keerthana ..." nameClass="mr-[16px] -ml-px" />
        <Participant name="Nireekshith..." nameClass="mr-[12px]" />
        <Participant name="Pranjala J" nameClass="mr-[12px] -ml-px tracking-[0.150px]" />
        <Participant name="Megha Jain" nameClass="mr-[12px] -ml-px tracking-[0.250px]" />
        <div className="flex h-[137.500px] flex-col items-center">
          <div className="flex size-[88px] items-center justify-center gap-[4px] rounded-full border border-[#5f5f5f] bg-[#292929]">
            <span className="size-[6px] rounded-full bg-white" />
            <span className="size-[6px] rounded-full bg-white" />
            <span className="size-[6px] rounded-full bg-white" />
          </div>
          <span className="mt-[9px] text-[14px] leading-[22px] text-white">View all</span>
        </div>
      </div>
      <div className="mt-[10.500px] ml-[5px] flex h-[166px] w-[301px] items-center justify-center bg-[#333333] pr-[2px]">
        <Avatar size={70} />
      </div>
    </aside>
  );
}

function Taskbar() {
  return (
    <footer className="flex h-[60px] shrink-0 items-stretch border-t border-[#464646] bg-[linear-gradient(90deg,#3a1b15_0px,#3c1a18_90px,#2a1e26_150px,#28272a_240px,#1e292e_330px,#1e2a2f_420px,#231f3c_480px,#222440_530px,#1d2b2e_600px,#1d2e2a_680px,#1b2f2a_850px,#1f2c2f_930px,#1e2733_990px,#28292a_1080px,#2a2825_1140px,#281f25_1210px,#2a2026_1320px,#3d1c12_1400px,#381a16_1460px,#221c2b_1510px,#1b1e37_1570px,#1e2135_1680px,#252430_1750px,#3a1e18_1820px,#3b1c14_1920px)] text-white">
      <div className="flex w-[447px] items-center pl-[24px]">
        <div className="relative mt-[-2px]">
          <HazeSun id="hz2" w={30} />
          <span className="absolute -top-[5px] left-[15px] flex size-[20px] items-center justify-center rounded-full bg-[#c42b1c] text-[13px]">1</span>
        </div>
        <div className="mt-[-2px] ml-[10px] flex flex-col text-[14.500px] leading-[20px]">
          <span className="tracking-[-0.200px]">27°C</span>
          <span className="tracking-[-0.200px] text-[#c8c2c0]">Haze</span>
        </div>
      </div>
      <div className="flex w-[47px] items-center">
        <Icon w={29}>
          <defs>
            <linearGradient id="win" x1="0" y1="0" x2="1" y2="1">
              <stop offset="0" stopColor="#7df0ff" />
              <stop offset="1" stopColor="#0a96ff" />
            </linearGradient>
          </defs>
          <path d="M1 0H14V14H0V1A1 1 0 0 1 1 0ZM15 0H28A1 1 0 0 1 29 1V14H15ZM0 15H14V29H1A1 1 0 0 1 0 28ZM15 15H29V28A1 1 0 0 1 28 29H15Z" fill="url(#win)" />
        </Icon>
      </div>
      <div className="mt-[10px] flex h-[38px] w-[273px] items-center rounded-full bg-[#f3f3f4] pr-[3px] pl-[13px]">
        <Icon w={20}>
          <circle cx="9" cy="9" r="7.500" stroke="#222" strokeWidth="2" />
          <path d="M14.500 14.500L18.500 18.500" stroke="#222" strokeWidth="2.400" />
        </Icon>
        <span className="mt-px ml-[12px] flex-1 text-[16.500px] tracking-[-0.100px] text-[#5a5a5a]">Search</span>
        <span className="flex h-[33px] w-[66px] items-center justify-center rounded-full bg-black font-['Lato'] text-[8px] font-bold tracking-[0.200px]">lululemon</span>
      </div>
      <div className="ml-[3.500px] flex">
        {pinnedApps.map((a) => (
          <div key={a.key} className="relative flex w-[55px] shrink-0 items-center justify-center">
            {a.active && (
              <>
                <span className="absolute top-[4px] left-[2px] h-[50px] w-[50px] rounded-[5px] border border-white/10" />
                <span className="absolute top-[4px] left-[2px] h-[50px] w-[45px] rounded-[5px] border border-white/10 bg-white/8" />
              </>
            )}
            <div className="relative">{a.node}</div>
            {a.running && <span className="absolute bottom-[6px] h-[4px] w-[8px] rounded-full bg-[#9c9c9c]" />}
            {a.active && <span className="absolute bottom-[6px] left-[17px] h-[4px] w-[20px] rounded-full bg-[#60cdff]" />}
          </div>
        ))}
      </div>
      <div className="flex flex-1 items-center pl-[30px]">
        <Icon w={14} h={9}>
          <path d="M1.500 7.500L7 2L12.500 7.500" stroke="#fff" strokeWidth="1.800" />
        </Icon>
        <Icon w={22} h={16} className="ml-[22px]">
          <path d="M5 14.500A4.500 4.500 0 0 1 4 6A6.500 6.500 0 0 1 15.500 4.500L18.500 7L12 11Z" fill="#0f62ba" />
          <path d="M1 12Q1 7 6 6.500L14 10L9 14.500H4.500Q1 14.500 1 12Z" fill="#1a82dc" />
          <path d="M3 13.500L13 8.500Q15 6.500 18 7.500Q21 8.500 21 11.500Q20.500 14.500 17.500 14.500H5Z" fill="#2aa4ec" />
        </Icon>
        <div className="mt-[-1px] ml-[9px] flex h-[50px] w-[40px] items-center justify-center rounded-[5px] bg-white/8">
          <MicOffIcon size={22} bg="#2b2d44" />
        </div>
        <div className="mt-[-2px] ml-[8px] flex w-[40px] flex-col items-center text-[14.500px] leading-[20px] tracking-[-0.300px]">
          <span>ENG</span>
          <span>IN</span>
        </div>
        <Icon w={20} h={17} className="mt-[-1px] ml-[17px]">
          <g stroke="#fff" strokeWidth="1.500">
            <path d="M1 6.500Q10 -2 19 6.500M4 9.500Q10 4 16 9.500M6.800 12.300Q10 9.500 13.200 12.300" />
          </g>
          <circle cx="10" cy="14.200" r="1.800" fill="#fff" />
        </Icon>
        <Icon w={21} h={18} className="mt-[-1px] ml-[10px]">
          <path d="M1 6.500H4L9 2V16L4 11.500H1ZM11.500 6.500Q13 9 11.500 11.500M14 4Q17 9 14 14M16.700 1.800Q21.500 9 16.700 16.200" stroke="#fff" strokeWidth="1.400" />
        </Icon>
        <Icon w={21} h={14} className="mt-[-1px] ml-[9px]">
          <rect x="0.800" y="0.800" width="16.500" height="12.400" rx="2.500" stroke="#fff" strokeWidth="1.500" />
          <rect x="3" y="3" width="8.500" height="8" rx="1" fill="#fff" />
          <path d="M19 5V9" stroke="#fff" strokeWidth="2" />
        </Icon>
        <div className="mt-[-2px] ml-[13px] flex w-[85px] flex-col items-end text-[14.800px] leading-[20px]">
          <span>16:54</span>
          <span className="tracking-[0.120px]">13-11-2023</span>
        </div>
        <Icon w={19} h={20} className="mt-[-1px] ml-[9px]">
          <g stroke="#fff" strokeWidth="1.400">
            <path d="M9 2.500A5.500 5.500 0 0 0 3.500 8V12L1.500 16H16L14.500 12.500M6.500 17A2.300 2.300 0 0 0 11 17" />
            <path d="M7.500 7H11L7.500 11.500H11M13 2H17L13 7H17" />
          </g>
        </Icon>
      </div>
    </footer>
  );
}

export default function App() {
  return (
    <div className={`flex h-[1080px] w-[1920px] flex-col overflow-hidden bg-[#1f1f1f] ${UI}`}>
      <TitleBar />
      <Toolbar />
      <div className="mt-[6px] flex h-[884px] shrink-0">
        <SharedScreen />
        <Roster />
      </div>
      <div className="h-[6px] shrink-0" />
      <Taskbar />
    </div>
  );
}
